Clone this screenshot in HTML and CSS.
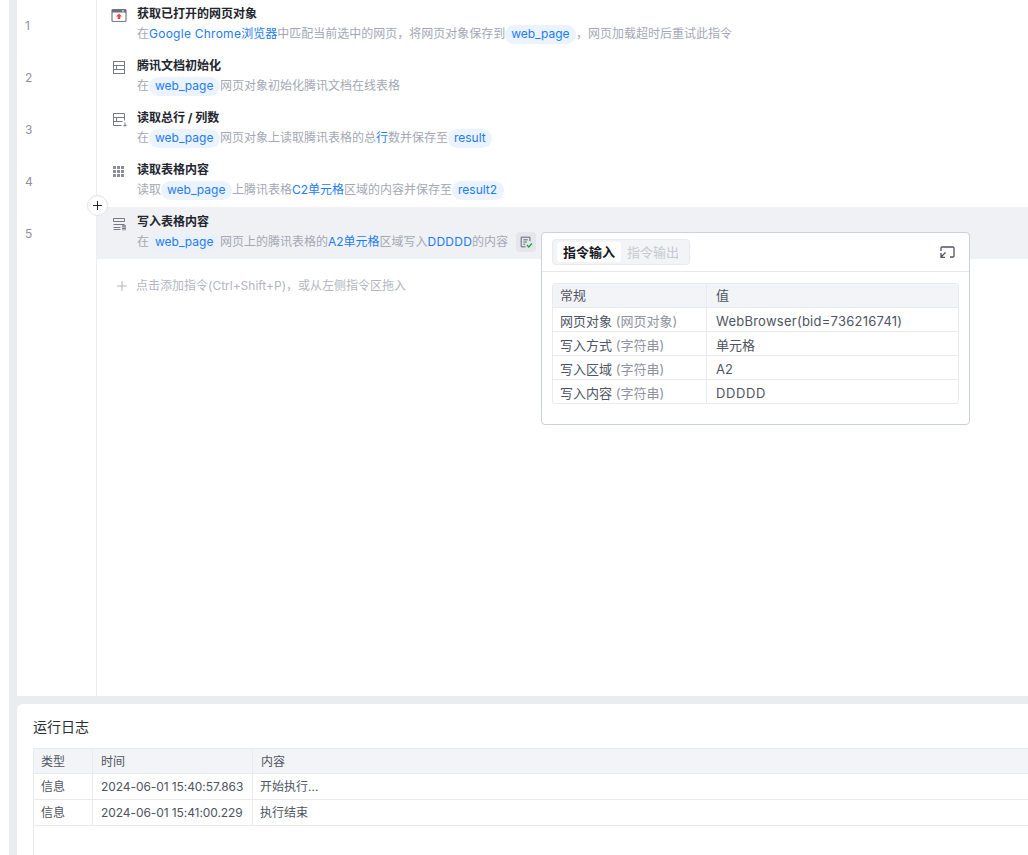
FILE: index.html
```html
<!DOCTYPE html>
<html lang="zh">
<head>
<meta charset="utf-8">
<title>运行日志</title>
<link rel="stylesheet" href="styles.css">
</head>
<body>
<div class="app">
  <div class="strip"></div>
  <div class="content">
    <section class="editor">
      <div class="gutter">
        <div class="num">1</div><div class="num">2</div><div class="num">3</div><div class="num">4</div><div class="num">5</div>
      </div>
      <div class="flow">
        <div class="row">
          <svg class="ico" viewBox="0 0 16 16"><rect x="1" y="2.500" width="14" height="12" rx="1" fill="#fff" stroke="#7a7d88" stroke-width="1.200"/><rect x="1" y="2.500" width="14" height="3" fill="#6b6f7b"/><rect x="11" y="3.500" width="2" height="1" fill="#fff"/><path d="M8 6.500l3 3H9.300v2.500H6.700V9.500H5z" fill="#f0444b"/></svg>
          <div class="body">
            <div class="title">获取已打开的网页对象</div>
            <div class="desc">在<b class="lat">Google Chrome</b><b>浏览器</b>中匹配当前选中的网页，将网页对象保存到<span class="pill">web_page</span>，网页加载超时后重试此指令</div>
          </div>
        </div>
        <div class="row">
          <svg class="ico" viewBox="0 0 16 16" fill="none" stroke="#777a86" stroke-width="1"><rect x="2.500" y="2.500" width="11" height="12"/><path d="M2.500 6.500h11M2.500 10.500h11M5.500 6.500v4"/></svg>
          <div class="body">
            <div class="title">腾讯文档初始化</div>
            <div class="desc">在<span class="pill">web_page</span>网页对象初始化腾讯文档在线表格</div>
          </div>
        </div>
        <div class="row">
          <svg class="ico" viewBox="0 0 16 16" fill="none" stroke="#777a86" stroke-width="1"><path d="M13.500 9.500v-7h-11v12h8M2.500 6.500h11M2.500 10.500h9M5.500 6.500v4M14 11.500v4M12.500 14.500h3"/></svg>
          <div class="body">
            <div class="title">读取总行 / 列数</div>
            <div class="desc">在<span class="pill">web_page</span>网页对象上读取腾讯表格的总<b>行</b>数并保存至<span class="pill">result</span></div>
          </div>
        </div>
        <div class="row">
          <svg class="ico" viewBox="0 0 16 16" fill="#8b8e99"><rect x="2" y="3" width="3" height="3"/><rect x="6" y="3" width="3" height="3"/><rect x="10" y="3" width="3" height="3"/><rect x="2" y="7" width="3" height="3"/><rect x="6" y="7" width="3" height="3"/><rect x="10" y="7" width="3" height="3"/><rect x="2" y="11" width="3" height="3"/><rect x="6" y="11" width="3" height="3"/><rect x="10" y="11" width="3" height="3"/></svg>
          <div class="body">
            <div class="title">读取表格内容</div>
            <div class="desc">读取<span class="pill">web_page</span>上腾讯表格<b>C2单元格</b>区域的内容并保存至<span class="pill">result2</span></div>
          </div>
        </div>
        <div class="row active">
          <span class="insert"><svg viewBox="0 0 9 9" width="9" height="9" stroke="#22252e" stroke-width="1"><path d="M4.500 0v9M0 4.500h9"/></svg></span>
          <svg class="ico" viewBox="0 0 16 16" fill="none" stroke="#777a86" stroke-width="1"><path d="M2.500 3.500h11v3h-11zM2.500 9.500h11M2.500 12.500h7M2.500 14.500h7M11 11h4M11 13.500h4M12 10v5.500M14 10v5.500"/></svg>
          <div class="body">
            <div class="title">写入表格内容</div>
            <div class="desc">在<span class="pill clear">web_page</span>网页上的腾讯表格的<b>A2单元格</b>区域写入<b class="lat">DDDDD</b>的内容<span class="state"><svg viewBox="0 0 16 16" width="14" height="14" fill="none"><path d="M12.500 7V2.500h-10v11h5M5 5.500h5M5 8h4M5 10.500h2" stroke="#5d6270" stroke-width="1.100"/><path d="M9 11.500l2.200 2.200 3.500-4" stroke="#18a33c" stroke-width="1.500"/></svg></span></div>
          </div>
        </div>
        <div class="add"><svg class="add-plus" viewBox="0 0 10 10" width="10" height="10" stroke="#b3b6c0" stroke-width="1"><path d="M5 0v10M0 5h10"/></svg>点击添加指令(Ctrl+Shift+P)，或从左侧指令区拖入</div>
      </div>
      <aside class="pop">
        <header class="pop-head">
          <div class="tabs"><span class="tab on">指令输入</span><span class="tab">指令输出</span></div>
          <svg class="expand" viewBox="0 0 15 12" width="15" height="12" fill="none" stroke="#4e5463" stroke-width="1.300"><path d="M1 5V2c0-.6.400-1 1-1h11c.6 0 1 .4 1 1v8c0 .6-.4 1-1 1h-3M1.500 10.500l4-4M1 7v4.300h4"/></svg>
        </header>
        <table class="grid">
          <tr class="th"><td class="c1">常规</td><td>值</td></tr>
          <tr><td>网页对象 <i>(网页对象)</i></td><td class="val">WebBrowser(bid=736216741)</td></tr>
          <tr><td>写入方式 <i>(字符串)</i></td><td>单元格</td></tr>
          <tr><td>写入区域 <i>(字符串)</i></td><td>A2</td></tr>
          <tr><td>写入内容 <i>(字符串)</i></td><td class="val wide">DDDDD</td></tr>
        </table>
      </aside>
    </section>
    <section class="log">
      <h2 class="log-title">运行日志</h2>
      <div class="log-table">
        <div class="log-row log-th"><span class="lc1">类型</span><span class="lc2">时间</span><span class="lc3">内容</span></div>
        <div class="log-row"><span class="lc1">信息</span><span class="lc2 stamp">2024-06-01 15:40:57.863</span><span class="lc3 shift">开始执行...</span></div>
        <div class="log-row"><span class="lc1">信息</span><span class="lc2 stamp">2024-06-01 15:41:00.229</span><span class="lc3 shift">执行结束</span></div>
      </div>
    </section>
  </div>
</div>
</body>
</html>
```
FILE: styles.css
```css
* { box-sizing: border-box; }
html, body { margin: 0; height: 855px; overflow: hidden; background: #fff; }
body { font-family: Inter, "Noto Sans CJK SC", sans-serif; font-size: 12px; color: #4e5463; }
.app { display: flex; height: 855px; padding-left: 9px; overflow: hidden; }
.strip { width: 8px; background: #ebecf0; flex: none; }
.content { flex: 1; display: flex; flex-direction: column; background: #ebecf0; min-width: 0; }
.editor { height: 696px; background: #fff; display: flex; position: relative; flex: none; }
.gutter { width: 80px; border-right: 1px solid #eceef2; flex: none; color: #8f939d; }
.num { height: 52px; padding: 17px 0 0 8px; line-height: 18px; font-size: 12px; }
.flow { flex: 1; min-width: 0; }
.row { height: 52px; display: flex; padding: 6px 0 0 14px; position: relative; }
.row.active { background: #f0f1f5; margin-top: -1px; padding-top: 7px; }
.ico { width: 16px; height: 16px; margin-top: 1px; margin-right: 10px; flex: none; }
.title { font-size: 12px; font-weight: 700; line-height: 16px; color: #22252e; }
.desc { font-size: 12px; line-height: 20px; margin-top: 2px; color: #a4a8b4; white-space: nowrap; display: flex; align-items: center; }
.desc b { font-weight: 400; color: #1b7cf2; }
.desc .lat { letter-spacing: .25px; }
.pill { display: inline-block; height: 19px; line-height: 18px; padding: 0 6.500px 0 6px; border-radius: 10px; background: #ebf3fe; color: #1b7cf2; font-size: 12px; }
.pill.clear { background: #ebf1fb; }
.state { display: inline-flex; align-items: center; justify-content: center; width: 20px; height: 20px; margin-left: 8px; border-radius: 4px; background: #e4e6eb; }
.insert { position: absolute; left: -10px; top: -12px; width: 21px; height: 21px; border-radius: 50%; border: 1px solid #dfe1e6; background: #fff; display: flex; align-items: center; justify-content: center; }
.add { padding: 18px 0 0 20px; line-height: 18px; color: #b3b6c0; display: flex; align-items: center; white-space: nowrap; }
.add-plus { margin-right: 9px; flex: none; }
.pop { position: absolute; left: 524px; top: 232px; width: 429px; height: 193px; background: #fff; border: 1px solid #ccd0d8; border-radius: 4px; }
.pop-head { height: 39px; border-bottom: 1px solid #e6e8ec; padding: 6px 10px 0; display: flex; justify-content: space-between; align-items: flex-start; }
.tabs { display: flex; height: 26px; width: 138px; padding: 2px 4px; background: #f3f4f7; border: 1px solid #e8eaee; border-radius: 4px; font-size: 13px; }
.tab { width: 64px; line-height: 20px; text-align: center; color: #c6c9d0; }
.tab.on { background: #fff; color: #15171c; font-weight: 700; border-radius: 3px; }
.expand { margin: 7px 4px 0 0; }
.grid { border-collapse: separate; border-spacing: 0; width: 407px; margin: 11px 0 0 10px; table-layout: fixed; font-size: 13px; border: 1px solid #e8eaee; border-radius: 3px; color: #4e5463; }
.grid td { height: 24px; padding: 3px 7px 0; line-height: 20px; border-bottom: 1px solid #e8eaee; white-space: nowrap; }
.grid td:first-child { width: 154px; border-right: 1px solid #e8eaee; }
.grid tr:last-child td { border-bottom: 0; height: 23px; }
.grid td + td { padding-left: 9px; }
.grid .val { letter-spacing: .25px; }
.grid .wide { letter-spacing: .6px; }
.grid i { font-style: normal; color: #8f939d; }
.grid .th td { background: #f3f4f7; padding-top: 0; padding-bottom: 2px; line-height: 20px; }
.log { flex: 1; margin-top: 8px; background: #fff; border-radius: 6px 0 0 0; padding: 14px 0 0 16px; min-height: 0; }
.log-title { margin: 0; font-size: 14px; font-weight: 400; line-height: 18px; color: #2a2d36; }
.log-table { margin-top: 12px; border: 1px solid #e8eaee; border-right: 0; border-bottom: 0; height: 107px; }
.log-row { display: flex; height: 26px; border-bottom: 1px solid #e8eaee; line-height: 25px; }
.log-th { height: 25px; background: #f3f4f7; }
.lc1 { width: 59px; padding-left: 7px; border-right: 1px solid #e8eaee; flex: none; }
.lc2 { width: 160px; padding-left: 8px; border-right: 1px solid #e8eaee; flex: none; }
.stamp { letter-spacing: -.08px; }
.lc3 { padding-left: 8px; }
.lc3.shift { padding-left: 7px; }
```
